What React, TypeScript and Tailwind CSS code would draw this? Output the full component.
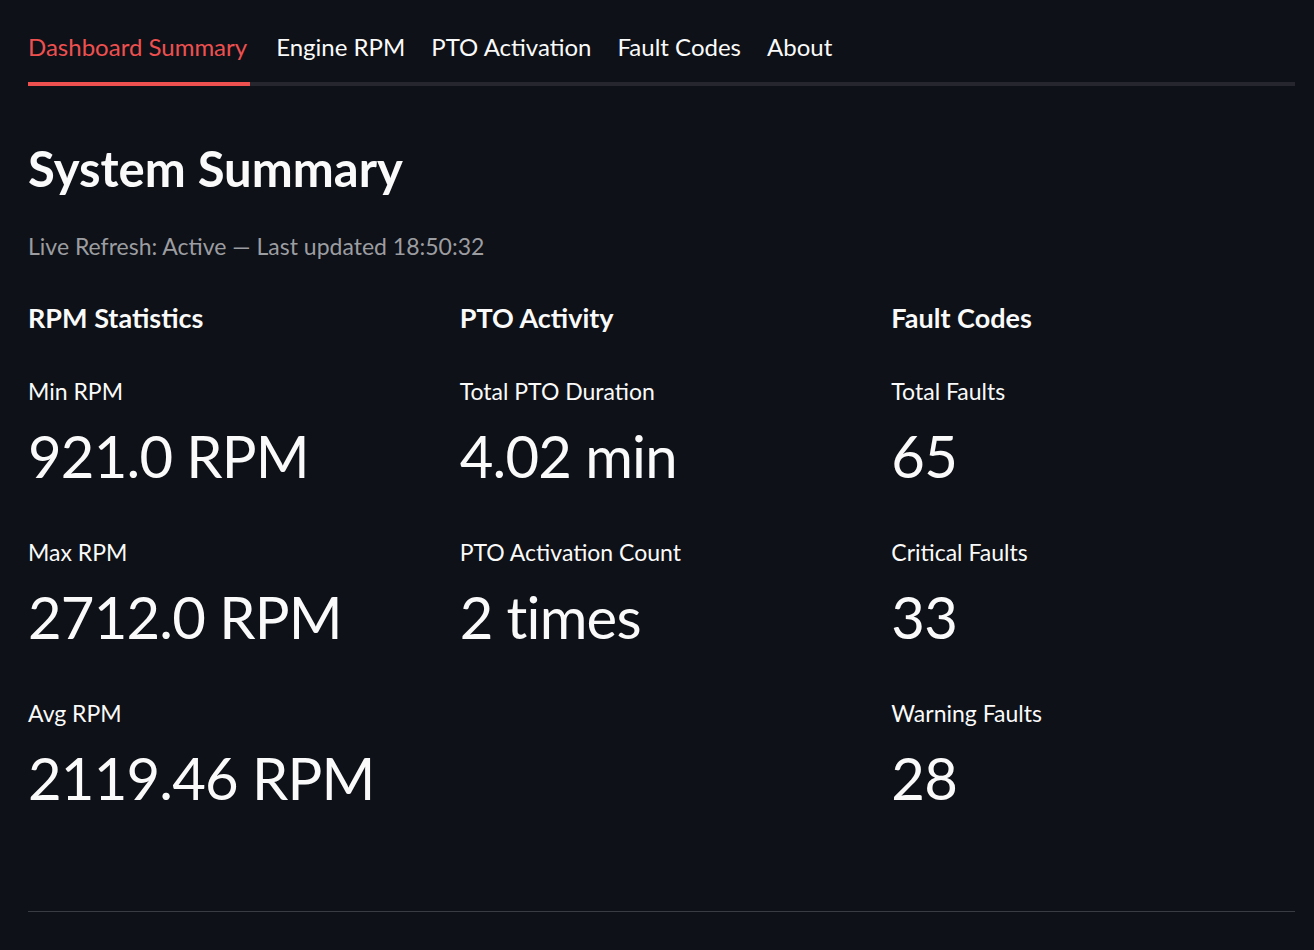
import React from "react";

const font = { fontFamily: '"Lato", "Noto Sans", sans-serif' };

function Metric({ label, value }: { label: string; value: string }) {
  return (
    <div className="mb-[40px]">
      <div className="text-[23px] leading-[36px] text-[#fafafa]">{label}</div>
      <div className="mt-[9px] text-[58px] leading-[76px] tracking-[-0.8px] text-[#fafafa]">{value}</div>
    </div>
  );
}

function Column({ title, items }: { title: string; items: [string, string][] }) {
  return (
    <div className="flex-1 min-w-0">
      <div className="text-[27px] leading-[36px] font-bold text-[#fafafa]">{title}</div>
      <div className="mt-[37px]">
        {items.map(([l, v]) => (
          <Metric key={l} label={l} value={v} />
        ))}
      </div>
    </div>
  );
}

export default function App() {
  const tabs = ["Dashboard Summary", "Engine RPM", "PTO Activation", "Fault Codes", "About"];
  return (
    <div className="min-h-screen bg-[#0e1117] text-[#fafafa] pl-[28px] pr-[19px] pb-[38px]" style={font}>
      <div className="flex gap-[26px] border-b-[4px] border-[#26272e]">
        {tabs.map((t, i) => (
          <div
            key={t}
            className={
              i === 0
                ? "pt-[28px] pb-[16px] pr-[3px] -mb-[4px] border-b-[4px] border-[#ee5050] text-[#ee5050] text-[24px] leading-[38px]"
                : "pt-[28px] pb-[16px] text-[#fafafa] text-[24px] leading-[38px]"
            }
          >
            {t}
          </div>
        ))}
      </div>
      <h2 className="mt-[52px] text-[49px] leading-[60px] font-bold text-[#fafafa]">System Summary</h2>
      <div className="mt-[30px] text-[23px] leading-[36px] text-[#9c9da1]">
        Live Refresh: Active — Last updated 18:50:32
      </div>
      <div className="mt-[36px] flex gap-[28px]">
        <Column
          title="RPM Statistics"
          items={[
            ["Min RPM", "921.0 RPM"],
            ["Max RPM", "2712.0 RPM"],
            ["Avg RPM", "2119.46 RPM"],
          ]}
        />
        <Column
          title="PTO Activity"
          items={[
            ["Total PTO Duration", "4.02 min"],
            ["PTO Activation Count", "2 times"],
          ]}
        />
        <Column
          title="Fault Codes"
          items={[
            ["Total Faults", "65"],
            ["Critical Faults", "33"],
            ["Warning Faults", "28"],
          ]}
        />
      </div>
      <div className="mt-[55px] h-px bg-[#3a3c43]" />
    </div>
  );
}
